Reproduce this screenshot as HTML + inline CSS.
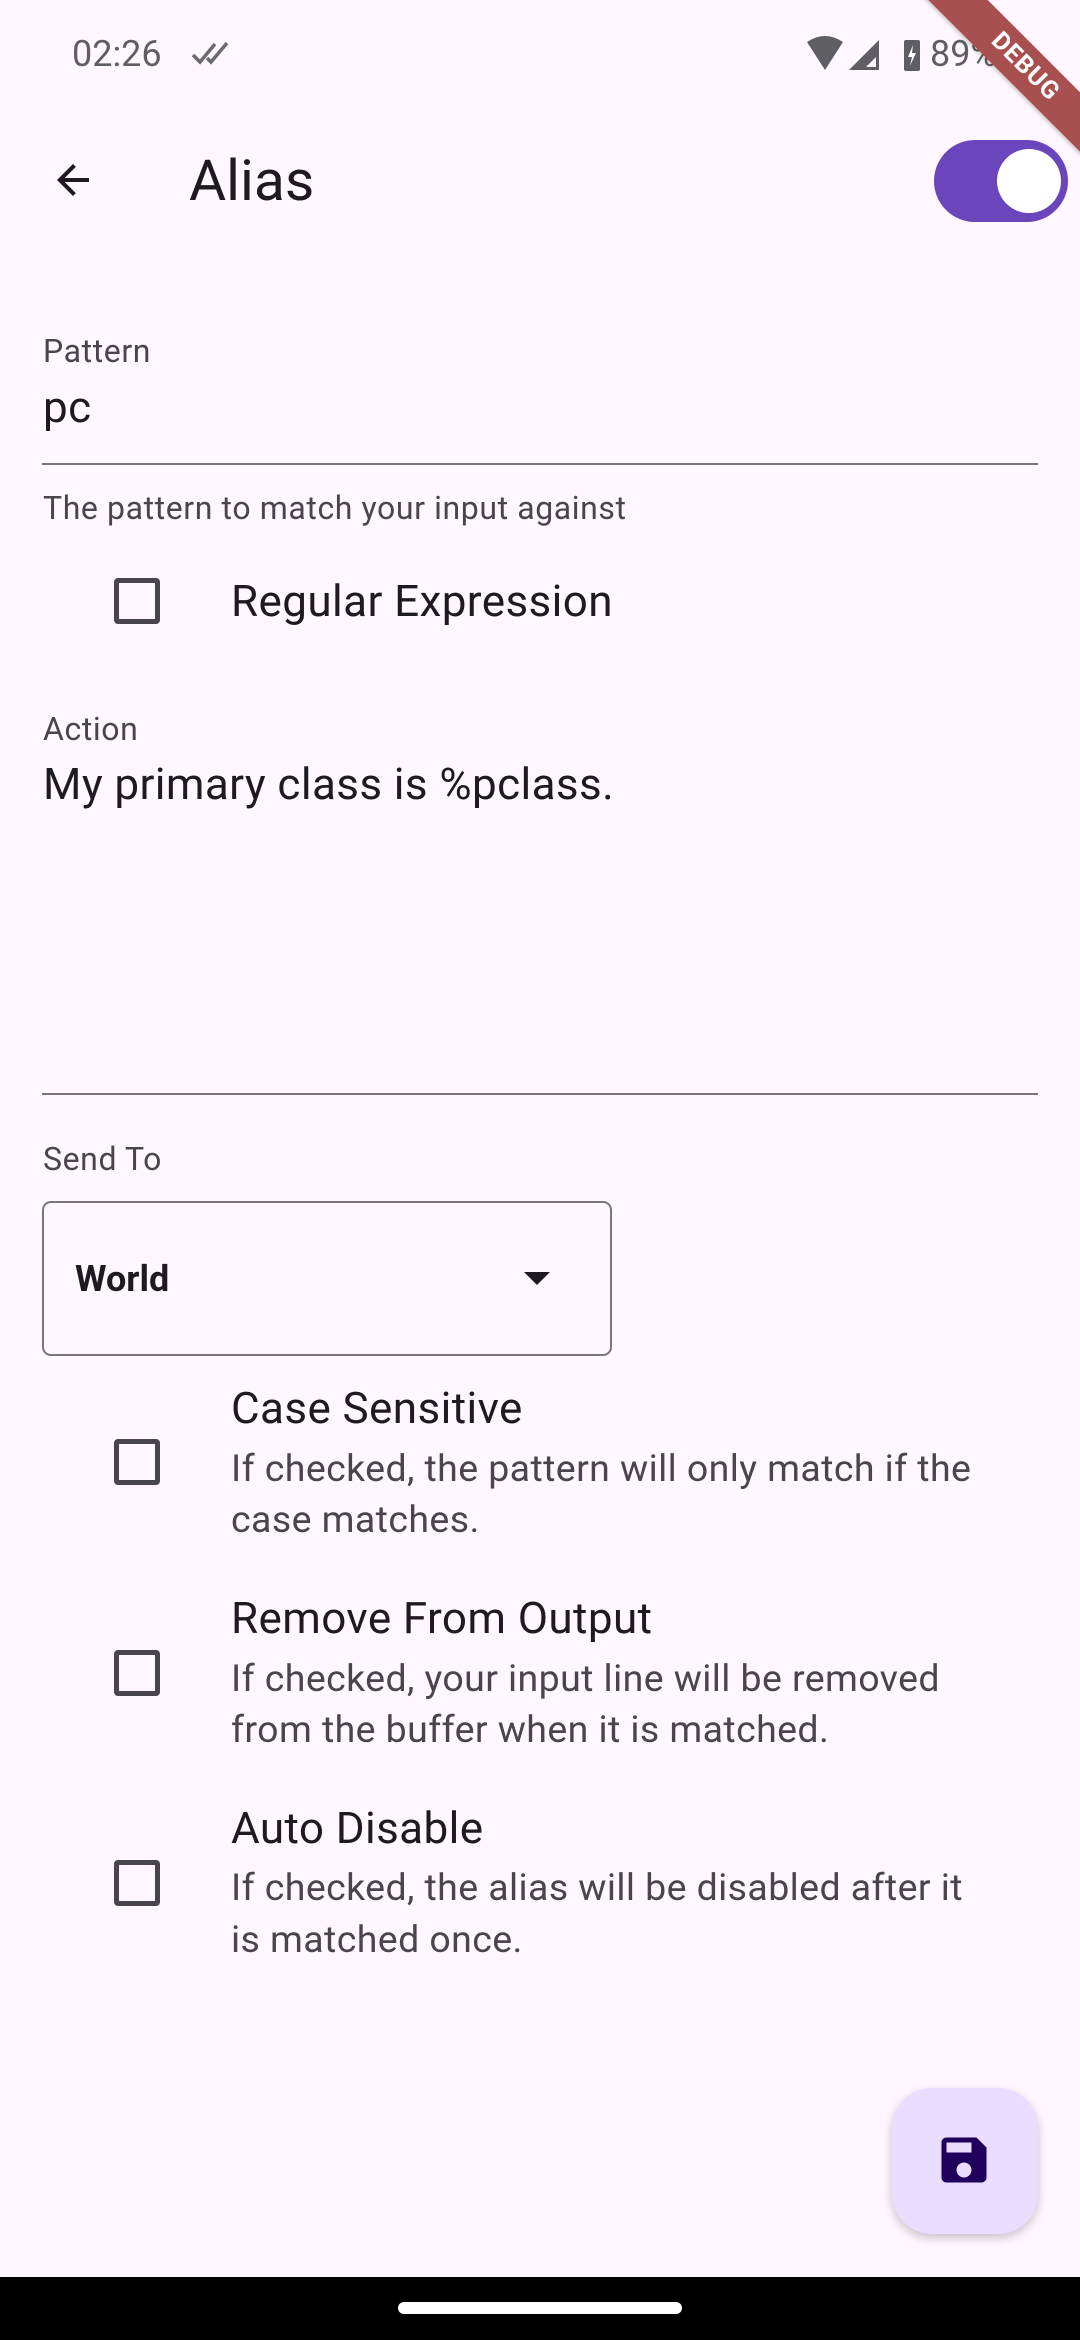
<!DOCTYPE html>
<html><head><meta charset="utf-8"><style>
*{margin:0;padding:0;box-sizing:border-box}
body{width:1080px;height:2340px;background:#FEF7FF;position:relative;overflow:hidden;font-family:"Roboto","Liberation Sans",sans-serif;color:#1D1B20}
.t{position:absolute;white-space:nowrap;line-height:60px;height:60px}
.cb{position:absolute;left:114px;width:46px;height:46px;border:5px solid #49454F;border-radius:4px}
.line{position:absolute;left:42px;width:996px;height:2px;background:#79747E}
.lbl{font-size:32px;color:#49454F;letter-spacing:0.6px}
.body{font-size:44px;letter-spacing:0.4px}
.desc{font-size:37.5px;color:#49454F;letter-spacing:0.4px}
</style></head><body>
<div class="t" style="left:72px;top:24px;font-size:36px;color:#5f5f63">02:26</div>
<svg style="position:absolute;left:190px;top:40px" width="42" height="28" viewBox="0 0 42 28"><path d="M3 15 L10 22 L25 4 M17 18 L21 22 L37 3" stroke="#6a6a6e" stroke-width="3.5" fill="none"/></svg>
<svg style="position:absolute;left:805px;top:36px" width="140" height="36" viewBox="0 0 140 36"><path d="M2 6 Q20 -6 38 6 L20 34 Z" fill="#5f5f63"/><path d="M44 34 L74 4 L74 34 Z" fill="#5f5f63"/><path d="M61 31 L71 21 L71 31 Z" fill="#fef7ff"/><rect x="99" y="4" width="16" height="31" rx="2" fill="#5f5f63"/><path d="M108 9 L103 21 L107 21 L105 30 L111 17 L107 17 Z" fill="#fff"/></svg>
<div class="t" style="left:930px;top:24px;font-size:36px;color:#5f5f63">89%</div>
<svg style="position:absolute;left:49px;top:156px" width="48" height="48" viewBox="0 0 24 24"><path d="M20 11H7.83l5.59-5.59L12 4l-8 8 8 8 1.41-1.41L7.83 13H20v-2z" fill="#1D1B20"/></svg>
<div class="t" style="left:189px;top:151px;font-size:57px">Alias</div>
<div style="position:absolute;left:934px;top:140px;width:134px;height:82px;border-radius:41px;background:#6A45BC"></div>
<div style="position:absolute;left:997px;top:149px;width:64px;height:64px;border-radius:50%;background:#fff"></div>
<div style="position:absolute;left:895px;top:46px;width:260px;height:42px;background:#a8504f;transform:rotate(45deg);color:#fff;font-weight:bold;font-size:25px;text-align:center;line-height:42px;letter-spacing:1px;box-shadow:0 2px 4px rgba(0,0,0,.2)">DEBUG</div>
<div class="t lbl" style="left:43px;top:321px">Pattern</div>
<div class="t body" style="left:43px;top:377px">pc</div>
<div class="line" style="top:463px"></div>
<div class="t lbl" style="left:43px;top:478px">The pattern to match your input against</div>
<div class="cb" style="top:578px"></div>
<div class="t body" style="left:231px;top:571px">Regular Expression</div>
<div class="t lbl" style="left:43px;top:699px">Action</div>
<div class="t body" style="left:43px;top:754px">My primary class is %pclass.</div>
<div class="line" style="top:1093px"></div>
<div class="t lbl" style="left:43px;top:1129px">Send To</div>
<div style="position:absolute;left:42px;top:1201px;width:570px;height:155px;border:2px solid #79747E;border-radius:9px"></div>
<div class="t" style="left:75px;top:1249px;font-size:36px;font-weight:bold">World</div>
<svg style="position:absolute;left:522px;top:1270px" width="30" height="16" viewBox="0 0 30 16"><path d="M2 2 L28 2 L15 15 Z" fill="#1D1B20"/></svg>
<div class="cb" style="top:1439px"></div>
<div class="t body" style="left:231px;top:1378px">Case Sensitive</div>
<div class="t desc" style="left:231px;top:1439px">If checked, the pattern will only match if the</div>
<div class="t desc" style="left:231px;top:1490px">case matches.</div>
<div class="cb" style="top:1650px"></div>
<div class="t body" style="left:231px;top:1588px">Remove From Output</div>
<div class="t desc" style="left:231px;top:1649px">If checked, your input line will be removed</div>
<div class="t desc" style="left:231px;top:1700px">from the buffer when it is matched.</div>
<div class="cb" style="top:1860px"></div>
<div class="t body" style="left:231px;top:1798px">Auto Disable</div>
<div class="t desc" style="left:231px;top:1858px">If checked, the alias will be disabled after it</div>
<div class="t desc" style="left:231px;top:1910px">is matched once.</div>
<div style="position:absolute;left:892px;top:2088px;width:146px;height:146px;border-radius:40px;background:#EADDFF;box-shadow:0 4px 10px rgba(0,0,0,.22)"></div>
<svg style="position:absolute;left:934px;top:2130px" width="60" height="60" viewBox="0 0 24 24"><path d="M17 3H5c-1.11 0-2 .9-2 2v14c0 1.1.89 2 2 2h14c1.1 0 2-.9 2-2V7l-4-4zm-5 16c-1.66 0-3-1.340-3-3s1.34-3 3-3 3 1.34 3 3-1.34 3-3 3zm3-10H5V5h10v4z" fill="#21005D"/></svg>
<div style="position:absolute;left:0;top:2277px;width:1080px;height:63px;background:#000"></div>
<div style="position:absolute;left:398px;top:2302px;width:284px;height:12px;border-radius:6px;background:#fff"></div>
</body></html>
